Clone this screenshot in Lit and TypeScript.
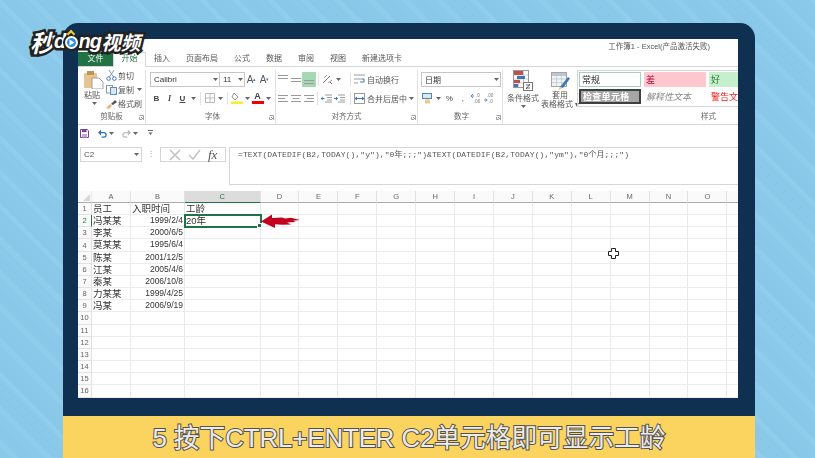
import { LitElement, html, svg, css } from 'lit';
import { customElement } from 'lit/decorators.js';

const COLS = ['A', 'B', 'C', 'D', 'E', 'F', 'G', 'H', 'I', 'J', 'K', 'L', 'M', 'N', 'O', ''];
const ROWS: string[][] = [
  ['员工', '入职时间', '工龄'],
  ['冯某某', '1999/2/4', '20年'],
  ['李某', '2000/6/5'],
  ['莫某某', '1995/6/4'],
  ['陈某', '2001/12/5'],
  ['江某', '2005/4/6'],
  ['秦某', '2006/10/8'],
  ['力某某', '1999/4/25'],
  ['冯某', '2006/9/19'],
];
const FORMULA = '=TEXT(DATEDIF(B2,TODAY(),"y"),"0年;;;")&TEXT(DATEDIF(B2,TODAY(),"ym"),"0个月;;;")';
const TABS = ['插入', '页面布局', '公式', '数据', '审阅', '视图', '新建选项卡'];

const icon = (w: number, h: number, body: unknown) =>
  html`<svg width=${w} height=${h} viewBox="0 0 ${w} ${h}" fill="none">${body}</svg>`;

const caret = html`<span class="tb caret">
  <svg width="5" height="3" viewBox="0 0 5 3"><path d="M0 0h5L2.5 3z" fill="#666" /></svg>
</span>`;

const launcher = icon(5, 5, svg`<path d="M.5 .5h4v4M.5 2v2.5H3" stroke="#888" stroke-width=".8"/><path d="M2 2l2.5 2.5" stroke="#666" stroke-width=".8"/>`);

// horizontal text alignment glyphs, y offset picks top / middle / bottom
const lines = (widths: number[], anchor: 'l' | 'c' | 'r', y0 = 2) =>
  icon(10, 11, widths.map((w, i) => {
    const x = anchor === 'l' ? 0 : anchor === 'c' ? (10 - w) / 2 : 10 - w;
    return svg`<rect x=${x} y=${y0 + i * 3} width=${w} height="1" fill="#9a9a9a"/>`;
  }));

const indent = (flip: boolean) => icon(11, 10, svg`
  <path d="M4 2h7M6 4.5h5M6 7h5M4 9h7" stroke="#9a9a9a"/>
  <path d=${flip ? 'M0 5.5h3.5M2 4l1.7 1.5L2 7' : 'M3.5 5.5H0M1.8 4L.2 5.5 1.8 7'} stroke="#3b78b5"/>`);

const ICONS = {
  paste: icon(20, 19, svg`
    <rect x="0" y="3" width="13" height="15" rx="1" fill="#e6c68e"/>
    <rect x="3" y="1" width="7" height="4" fill="#b9975f"/>
    <path d="M8 8h7l4 4v7H8z" fill="#fff" stroke="#8a8a8a" stroke-width=".8"/>`),
  scissors: icon(11, 11, svg`
    <path d="M3 0l4.5 7M8 0L3.5 7" stroke="#8a99a8"/>
    <circle cx="2.6" cy="8.6" r="1.8" stroke="#3b78b5"/><circle cx="8.4" cy="8.6" r="1.8" stroke="#3b78b5"/>`),
  copy: icon(11, 10, svg`
    <rect x=".5" y=".5" width="6" height="7.5" fill="#fff" stroke="#8a99a8"/>
    <rect x="4.5" y="2.5" width="6" height="7" fill="#dbe8f3" stroke="#5d8db8"/>`),
  brush: icon(11, 10, svg`
    <path d="M0 9l4-4 2 2-3 3z" fill="#e2bd7a"/><path d="M5 5l4-4 2 2-4 3z" fill="#555"/>`),
  orient: icon(11, 11, svg`
    <path d="M1 9L8 2" stroke="#777"/><path d="M2 4l3-3M6 9l4-3" stroke="#999"/><path d="M8 8l2 2" stroke="#c0504d"/>`),
  wrap: icon(11, 11, svg`
    <path d="M0 1h11M0 5h8M0 9h4" stroke="#9a9a9a"/><path d="M8 5h2v3H6" stroke="#3b78b5"/>`),
  merge: icon(11, 11, svg`
    <rect x=".5" y=".5" width="10" height="10" stroke="#9a9a9a"/><path d="M1 5.5h9M3 4l-2 1.5L3 7M8 4l2 1.5L8 7" stroke="#3b78b5"/>`),
  borders: icon(10, 10, svg`<path d="M.5 .5h9v9h-9zM5 .5v9M.5 5h9" stroke="#bbb"/>`),
  fill: icon(12, 12, svg`
    <path d="M3 1l4 4-3 3-3-3z" fill="#fff" stroke="#777" stroke-width=".8"/><rect x="0" y="9.5" width="12" height="2.5" fill="#f7ee2c"/>`),
  currency: icon(11, 11, svg`
    <rect x=".5" y=".5" width="9" height="5" fill="#dbe8f3" stroke="#4a86b8"/><rect x="3" y="6.5" width="5" height="4" fill="#ecc98d"/>`),
  decUp: icon(11, 10, svg`<path d="M0 3h3M2 1L0 3l2 2" stroke="#3b78b5" stroke-width=".8"/><text x="5" y="4" font-size="4.5" fill="#777">.0</text><text x="3" y="9.5" font-size="4.5" fill="#777">.00</text>`),
  decDown: icon(11, 10, svg`<text x="3" y="4" font-size="4.5" fill="#777">.00</text><path d="M0 7h3M1.5 5.5L3.2 7l-1.7 1.5" stroke="#3b78b5" stroke-width=".8"/><text x="5" y="9.5" font-size="4.5" fill="#777">.0</text>`),
  condFmt: icon(20, 21, svg`
    <rect x=".5" y=".5" width="15" height="17" fill="#fff" stroke="#999"/>
    <path d="M5.5 1v16M10.5 1v16M1 5h14M1 9h14M1 13h14" stroke="#bbb" stroke-width=".7"/>
    <rect x="1" y="1" width="9" height="4" fill="#c0504d"/><rect x="4" y="6" width="8" height="3" fill="#3b78b5"/>
    <rect x="1" y="10" width="6" height="3" fill="#c0504d"/><rect x="1" y="14" width="4" height="3" fill="#3b78b5"/>
    <rect x="10.5" y="12.5" width="9" height="8" fill="#fff" stroke="#777"/><path d="M13 15h4M13 18h4M17 14l-4 5" stroke="#444" stroke-width=".8"/>`),
  tableFmt: icon(19, 18, svg`
    <rect x=".5" y=".5" width="15" height="14" fill="#eef3f8" stroke="#a5a5a5"/>
    <rect x="1" y="1" width="14" height="3" fill="#b9c7d6"/>
    <path d="M5.5 1v13M10.5 1v13M1 7h14M1 10.5h14" stroke="#c4c4c4" stroke-width=".7"/>
    <path d="M9 15l8-10 2 1.5-7 9.5z" fill="#3b78b5"/><path d="M7 18l2-3 2.5 1z" fill="#e2bd7a"/>`),
  save: icon(9, 9, svg`<path d="M.5 .5h6.8l1.2 1.2v6.8h-8z" fill="#fff" stroke="#7b3f98"/><rect x="2" y=".5" width="4.5" height="2.6" fill="#7b3f98"/><rect x="2" y="5" width="5" height="3.5" fill="#c9a8d9"/>`),
  undo: icon(10, 9, svg`<path d="M2 3.5h4.5a2.5 2.5 0 0 1 0 5H4" stroke="#2f75b5" stroke-width="1.4"/><path d="M3.5 0L0 3.5 3.5 7z" fill="#2f75b5"/>`),
  redo: icon(10, 9, svg`<path d="M8 3.5H3.5a2.5 2.5 0 0 0 0 5H6" stroke="#bbb" stroke-width="1.4"/><path d="M6.5 0L10 3.5 6.5 7z" fill="#bbb"/>`),
  custom: icon(5, 6, svg`<path d="M0 .5h5" stroke="#666"/><path d="M.5 2.5h4L2.5 5z" fill="#666"/>`),
  cancel: icon(12, 12, svg`<path d="M1 1l10 10M11 1L1 11" stroke="#c4c4c4" stroke-width="1.6"/>`),
  enter: icon(13, 11, svg`<path d="M1 6l4 4 7-9" stroke="#c4c4c4" stroke-width="1.6"/>`),
  arrow: icon(40, 15, svg`<path d="M0 7.5L11 .5v3.5l10-.6 3 1 6-.7 9 2.3-7 .7 3 1.4-9 .4 4 2-9 .2-7-.5v3.8z" fill="#c4001f"/>`),
  cursor: icon(11, 11, svg`<path d="M3.5 .5h4v3h3v4h-3v3h-4v-3h-3v-4h3z" fill="#fff" stroke="#222"/>`),
  play: icon(7, 7, svg`<path d="M1.5 .5l5 3-5 3z" fill="#fff"/>`),
};

@customElement('app-root')
export class AppRoot extends LitElement {
  static styles = css`
    :host {
      display: block;
      position: relative;
      width: 815px;
      height: 458px;
      overflow: hidden;
      font-family: 'Liberation Sans', 'Noto Sans CJK SC', sans-serif;
      background: repeating-linear-gradient(45deg, #8bc9ea 0 8px, #90cceb 8px 13px, #89c8e9 13px 24px);
    }
    .frame {
      margin: 23px 60px 0 63px;
      height: 435px;
      display: flex;
      flex-direction: column;
      background: #0f3050;
      border-radius: 15px 15px 0 0;
    }
    .screen {
      margin: 16px 17px 0 15px;
      height: 359px;
      background: #fff;
      color: #444;
      font-size: 8px;
      display: flex;
      flex-direction: column;
      overflow: hidden;
      filter: blur(0.35px);
    }
    .caption {
      margin-top: 18px;
      height: 42px;
      box-sizing: border-box;
      padding-bottom: 3px;
      background: #fbd35f;
      display: flex;
      align-items: center;
      justify-content: center;
      color: #ececec;
      font-size: 25.7px;
      white-space: pre;
      -webkit-text-stroke: 2px #55524c;
      paint-order: stroke fill;
    }

    .title {
      height: 13px;
      display: flex;
      justify-content: flex-end;
      align-items: flex-end;
      padding-right: 28px;
      font-size: 7.5px;
      line-height: 10px;
      color: #555;
    }
    .tabs {
      height: 14px;
      display: flex;
      border-bottom: 1px solid #d6d6d6;
    }
    .tab {
      padding: 0 8px;
      line-height: 13px;
      color: #555;
      white-space: nowrap;
    }
    .tab.file {
      width: 35px;
      padding: 0;
      box-sizing: border-box;
      text-align: center;
      background: #217346;
      color: #fff;
    }
    .tab.active {
      padding: 0;
      text-align: center;
      color: #217346;
      background: #fff;
      height: 15px;
      border: 1px solid #d6d6d6;
      border-bottom: 0;
      box-sizing: border-box;
      width: 33px;
      line-height: 12px;
    }

    .ribbon {
      height: 57px;
      display: flex;
      border-bottom: 1px solid #d6d6d6;
      flex: none;
    }
    .group {
      display: flex;
      flex-direction: column;
      flex: none;
      border-right: 1px solid #e2e2e2;
      box-sizing: border-box;
      margin-top: 3px;
    }
    .g-clip { width: 68px; }
    .g-font { width: 130px; padding-left: 4px; }
    .g-align { width: 142px; }
    .g-num { width: 85px; padding-left: 3px; }
    .g-style { width: 235px; border-right: 0; overflow: hidden; }
    .body {
      height: 41px;
      display: flex;
    }
    .glabel {
      height: 12px;
      display: grid;
      grid-template-columns: 1fr auto 1fr;
      align-items: center;
      color: #666;
      font-size: 7.5px;
      line-height: 12px;
    }
    .glabel svg {
      justify-self: end;
      margin-right: 1px;
    }
    .g-style .glabel {
      display: flex;
      justify-content: flex-end;
      padding-right: 22px;
    }
    .stack {
      display: flex;
      flex-direction: column;
      gap: 3px;
      padding-top: 1px;
    }
    .row {
      display: flex;
      align-items: center;
      height: 16px;
      white-space: nowrap;
    }
    .tb {
      display: inline-flex;
      align-items: center;
      justify-content: center;
      width: 13px;
      height: 15px;
      flex: none;
      color: #444;
    }
    .tb.caret { width: 8px; }
    .tb.on { background: #a6d8b5; width: 14px; }
    .sep {
      width: 1px;
      height: 13px;
      background: #e2e2e2;
      margin: 0 2px;
      flex: none;
    }
    .g-font .sep { margin: 0 2.5px; }
    .sep.wide { margin: 0 2px 0 4px; }
    .g-num .row + .row .tb:not(.caret) { width: 13.5px; }

    .paste {
      width: 28px;
      box-sizing: border-box;
      padding-left: 6px;
      display: flex;
      flex-direction: column;
      align-items: flex-start;
      font-size: 8px;
      line-height: 10px;
      color: #555;
      white-space: nowrap;
    }
    .paste svg:first-child { margin-bottom: 2px; }
    .paste .caret { height: 6px; margin-left: 4px; }
    .clip-items {
      display: flex;
      flex-direction: column;
      gap: 3px;
      font-size: 8px;
      color: #555;
      white-space: nowrap;
    }
    .clip-items div {
      display: flex;
      align-items: center;
      height: 11px;
      gap: 1px;
    }
    .select {
      height: 15px;
      box-sizing: border-box;
      border: 1px solid #c6c6c6;
      background: #fff;
      display: flex;
      align-items: center;
      justify-content: space-between;
      padding: 0 0 0 3px;
      font-size: 8px;
      color: #333;
      flex: none;
    }
    .select.font { width: 70px; }
    .select.size { width: 25px; border-left: 0; }
    .select.fmt { width: 80px; }
    .letter { font-size: 8px; color: #444; font-weight: bold; }
    .letter.i { font-style: italic; font-family: 'Liberation Serif', serif; }
    .letter.u { text-decoration: underline; }
    .grow { font-size: 10px; color: #555; font-weight: normal; }
    .grow sup { font-size: 5px; color: #3b78b5; line-height: 0; }
    .redA {
      display: inline-flex;
      flex-direction: column;
      align-items: center;
      font-size: 9px;
      line-height: 9px;
      font-weight: bold;
      color: #444;
    }
    .redA i { width: 12px; height: 2.5px; background: #e00; }
    .wrap-col span.txt { margin-left: 1px; color: #555; }
    .big {
      display: flex;
      flex-direction: column;
      align-items: center;
      flex: none;
      font-size: 8px;
      line-height: 9px;
      color: #555;
      white-space: nowrap;
    }
    .big svg { margin-bottom: 1px; }
    .big.cond { width: 40px; }
    .big.cond svg { margin-bottom: 3px; }
    .big.cond .caret { height: 5px; margin-top: 2px; }
    .big.table { width: 34px; padding-top: 2px; }
    .gallery {
      width: 161px;
      flex: none;
      height: 37px;
      box-sizing: border-box;
      border: 1px solid #d6d6d6;
      border-right: 0;
      padding: 1px;
      display: grid;
      grid-template-columns: 62px 62px 60px;
      grid-template-rows: 15px 15px;
      gap: 2px 3px;
      overflow: hidden;
      font-size: 9px;
    }
    .style {
      display: flex;
      align-items: center;
      padding-left: 2px;
      box-sizing: border-box;
      white-space: nowrap;
      color: #333;
    }
    .s-normal { border: 1px solid #a6d0b8; }
    .s-bad { background: #ffc7ce; color: #b3002a; }
    .s-good { background: #c6efce; color: #267d32; }
    .s-check {
      background: #a5a5a5;
      color: #fff;
      font-weight: bold;
      border: 2px double #3f3f3f;
      letter-spacing: 0.3px;
    }
    .s-note { color: #8a8a8a; font-style: italic; }
    .s-warn { color: #f02020; }

    .qat {
      height: 16px;
      display: flex;
      align-items: center;
      padding-left: 2px;
      flex: none;
    }
    .qat .tb { width: 9px; }
    .qat .tb.caret { width: 8px; }
    .qat .tb.gap { margin-left: 9px; }
    .qat .tb.near { margin-left: 7px; }

    .fbar {
      height: 44px;
      padding-top: 6px;
      display: flex;
      align-items: flex-start;
      flex: none;
    }
    .name {
      width: 62px;
      height: 15px;
      margin-left: 2px;
      box-sizing: border-box;
      border: 1px solid #d6d6d6;
      display: flex;
      align-items: center;
      justify-content: space-between;
      padding: 0 1px 0 3px;
      font-size: 8px;
      color: #555;
    }
    .dots {
      width: 18px;
      text-align: center;
      color: #999;
      font-size: 8px;
      line-height: 14px;
    }
    .fx-box {
      width: 66px;
      height: 15px;
      box-sizing: border-box;
      border: 1px solid #d6d6d6;
      display: flex;
      align-items: center;
      justify-content: space-around;
      padding: 0 4px;
    }
    .fx {
      font-family: 'Liberation Serif', serif;
      font-style: italic;
      font-size: 13px;
      line-height: 13px;
      color: #555;
    }
    .formula {
      flex: 1;
      margin-left: 3px;
      height: 38px;
      box-sizing: border-box;
      border: 1px solid #d6d6d6;
      border-right: 0;
      padding: 2px 0 0 8px;
      font-family: 'Liberation Mono', 'Noto Sans CJK SC', monospace;
      font-size: 8px;
      letter-spacing: 0.09px;
      line-height: 10px;
      color: #555;
      white-space: pre;
    }

    .sheet {
      position: relative;
      flex: 1;
      display: grid;
      grid-template-columns: 14px 39px 54px 75.6px repeat(12, 38.9px) 12px;
      grid-template-rows: 12px repeat(16, 12.17px);
      overflow: hidden;
    }
    .c {
      box-sizing: border-box;
      border-right: 1px solid #e9e9e9;
      border-bottom: 1px solid #ececec;
      font-size: 9.5px;
      line-height: 11px;
      color: #333;
      padding: 0 1px;
      white-space: nowrap;
      overflow: hidden;
    }
    .c.num { text-align: right; font-size: 8.5px; }
    .h {
      display: flex;
      align-items: center;
      justify-content: center;
      padding: 0;
      font-size: 7.5px;
      color: #666;
      background: #fafafa;
      border-color: #e2e2e2;
    }
    .h.top { border-bottom-color: #ababab; }
    .h.on { background: #dcdcdc; color: #217346; border-bottom: 1px solid #217346; }
    .h.rowon { background: #fafafa; color: #217346; border-right: 1px solid #217346; }
    .corner { background: #fafafa; border-bottom-color: #ababab; position: relative; }
    .corner::after {
      content: '';
      position: absolute;
      right: 1px;
      bottom: 1px;
      border-left: 7px solid transparent;
      border-bottom: 7px solid #d6d6d6;
    }
    .sel {
      position: relative;
      outline: 2px solid #217346;
      outline-offset: -1px;
      z-index: 1;
      overflow: visible;
    }
    .sel::after {
      content: '';
      position: absolute;
      right: -2px;
      bottom: -2px;
      width: 3px;
      height: 3px;
      background: #217346;
      border: 1px solid #fff;
    }
    .arrow {
      position: absolute;
      left: 183px;
      top: 23px;
      z-index: 2;
      line-height: 0;
    }
    .cursor {
      position: absolute;
      left: 530px;
      top: 57px;
      line-height: 0;
    }

    .logo {
      position: absolute;
      left: 30px;
      top: 26px;
      display: flex;
      align-items: center;
      height: 30px;
      color: #fff;
      font-size: 19.5px;
      font-weight: bold;
      font-style: italic;
      -webkit-text-stroke: 5px #222;
      paint-order: stroke fill;
      white-space: nowrap;
      z-index: 5;
    }
    .logo .first { font-size: 24px; }
    .logo .latin { font-size: 20px; letter-spacing: -0.8px; }
    .logo .dot {
      width: 13px;
      height: 13px;
      margin: 3px 0 0 0;
      border-radius: 50%;
      background: #2c8fe0;
      border: 2px solid #fff;
      box-shadow: 0 0 0 2px #222;
      box-sizing: border-box;
      display: flex;
      align-items: center;
      justify-content: center;
      position: relative;
    }
    .logo .dot::before {
      content: '';
      position: absolute;
      top: -7px;
      left: 1px;
      width: 4px;
      height: 4px;
      border-left: 2px solid #f3c93d;
      border-top: 2px solid #f3c93d;
      transform: rotate(45deg);
    }
  `;

  private clipboard() {
    return html`<div class="group g-clip">
      <div class="body">
        <div class="paste">${ICONS.paste}<span>粘贴</span><span class="tb caret">${caret}</span></div>
        <div class="clip-items">
          <div>${ICONS.scissors}<span>剪切</span></div>
          <div>${ICONS.copy}<span>复制</span>${caret}</div>
          <div>${ICONS.brush}<span>格式刷</span></div>
        </div>
      </div>
      <div class="glabel"><i></i><span>剪贴板</span>${launcher}</div>
    </div>`;
  }

  private fontGroup() {
    return html`<div class="group g-font">
      <div class="body">
        <div class="stack">
          <div class="row">
            <div class="select font"><span>Calibri</span>${caret}</div>
            <div class="select size"><span>11</span>${caret}</div>
            <span class="tb grow">A<sup>▴</sup></span>
            <span class="tb grow">A<sup>▾</sup></span>
          </div>
          <div class="row">
            <span class="tb letter">B</span>
            <span class="tb letter i">I</span>
            <span class="tb letter u">U</span>${caret}
            <span class="sep"></span>
            <span class="tb">${ICONS.borders}</span>${caret}
            <span class="sep"></span>
            <span class="tb">${ICONS.fill}</span>${caret}
            <span class="tb redA">A<i></i></span>${caret}
          </div>
        </div>
      </div>
      <div class="glabel"><i></i><span>字体</span>${launcher}</div>
    </div>`;
  }

  private alignGroup() {
    return html`<div class="group g-align">
      <div class="body">
        <div class="stack">
          <div class="row">
            <span class="tb">${lines([10, 10], 'c', 1)}</span>
            <span class="tb">${lines([10, 10], 'c', 4)}</span>
            <span class="tb on">${lines([10, 10], 'c', 6)}</span>
            <span class="sep"></span>
            <span class="tb">${ICONS.orient}</span>${caret}
          </div>
          <div class="row">
            <span class="tb">${lines([10, 7, 10], 'l')}</span>
            <span class="tb">${lines([10, 7, 10], 'c')}</span>
            <span class="tb">${lines([10, 7, 10], 'r')}</span>
            <span class="sep"></span>
            <span class="tb">${indent(false)}</span>
            <span class="tb">${indent(true)}</span>
          </div>
        </div>
        <div class="stack wrap-col">
          <div class="row"><span class="sep wide"></span><span class="tb">${ICONS.wrap}</span><span class="txt">自动换行</span></div>
          <div class="row"><span class="sep wide"></span><span class="tb">${ICONS.merge}</span><span class="txt">合并后居中</span>${caret}</div>
        </div>
      </div>
      <div class="glabel"><i></i><span>对齐方式</span>${launcher}</div>
    </div>`;
  }

  private numberGroup() {
    return html`<div class="group g-num">
      <div class="body">
        <div class="stack">
          <div class="row"><div class="select fmt"><span>日期</span>${caret}</div></div>
          <div class="row">
            <span class="tb">${ICONS.currency}</span>${caret}
            <span class="tb">%</span>
            <span class="tb">,</span>
            <span class="tb">${ICONS.decUp}</span>
            <span class="tb">${ICONS.decDown}</span>
          </div>
        </div>
      </div>
      <div class="glabel"><i></i><span>数字</span>${launcher}</div>
    </div>`;
  }

  private stylesGroup() {
    return html`<div class="group g-style">
      <div class="body">
        <div class="big cond">${ICONS.condFmt}<span>条件格式</span>${caret}</div>
        <div class="big table">${ICONS.tableFmt}<span>套用</span><span>表格格式 ▾</span></div>
        <div class="gallery">
          <div class="style s-normal">常规</div>
          <div class="style s-bad">差</div>
          <div class="style s-good">好</div>
          <div class="style s-check">检查单元格</div>
          <div class="style s-note">解释性文本</div>
          <div class="style s-warn">警告文</div>
        </div>
      </div>
      <div class="glabel"><span>样式</span></div>
    </div>`;
  }

  private sheet() {
    const headers = COLS.map(
      (c) => html`<div class="c h top ${c === 'C' ? 'on' : ''}">${c}</div>`
    );
    const rows = Array.from({ length: 16 }, (_, r) => {
      const data = ROWS[r] ?? [];
      return html`<div class="c h ${r === 1 ? 'rowon' : ''}">${r + 1}</div>
        ${COLS.map((_c, i) => {
          const sel = r === 1 && i === 2 ? 'sel' : '';
          const num = i === 1 && r > 0 ? 'num' : '';
          return html`<div class="c ${sel} ${num}">${data[i] ?? ''}</div>`;
        })}`;
    });
    return html`<div class="sheet">
      <div class="c corner"></div>
      ${headers}${rows}
      <div class="arrow">${ICONS.arrow}</div>
      <div class="cursor">${ICONS.cursor}</div>
    </div>`;
  }

  render() {
    return html`
      <div class="frame">
        <div class="screen">
          <div class="title">工作簿1 - Excel(产品激活失败)</div>
          <div class="tabs">
            <div class="tab file">文件</div>
            <div class="tab active">开始</div>
            ${TABS.map((t) => html`<div class="tab">${t}</div>`)}
          </div>
          <div class="ribbon">
            ${this.clipboard()}${this.fontGroup()}${this.alignGroup()}${this.numberGroup()}${this.stylesGroup()}
          </div>
          <div class="qat">
            <span class="tb">${ICONS.save}</span>
            <span class="tb gap">${ICONS.undo}</span>${caret}
            <span class="tb near">${ICONS.redo}</span>${caret}
            <span class="tb near">${ICONS.custom}</span>
          </div>
          <div class="fbar">
            <div class="name"><span>C2</span>${caret}</div>
            <div class="dots">⋮</div>
            <div class="fx-box">${ICONS.cancel}${ICONS.enter}<span class="fx">fx</span></div>
            <div class="formula">${FORMULA}</div>
          </div>
          ${this.sheet()}
        </div>
        <div class="caption">5 按下CTRL+ENTER C2单元格即可显示工龄</div>
      </div>
      <div class="logo">
        <span class="first">秒</span><span class="latin">d</span>
        <span class="dot">${ICONS.play}</span>
        <span class="latin">ng</span><span>视频</span>
      </div>
    `;
  }
}
